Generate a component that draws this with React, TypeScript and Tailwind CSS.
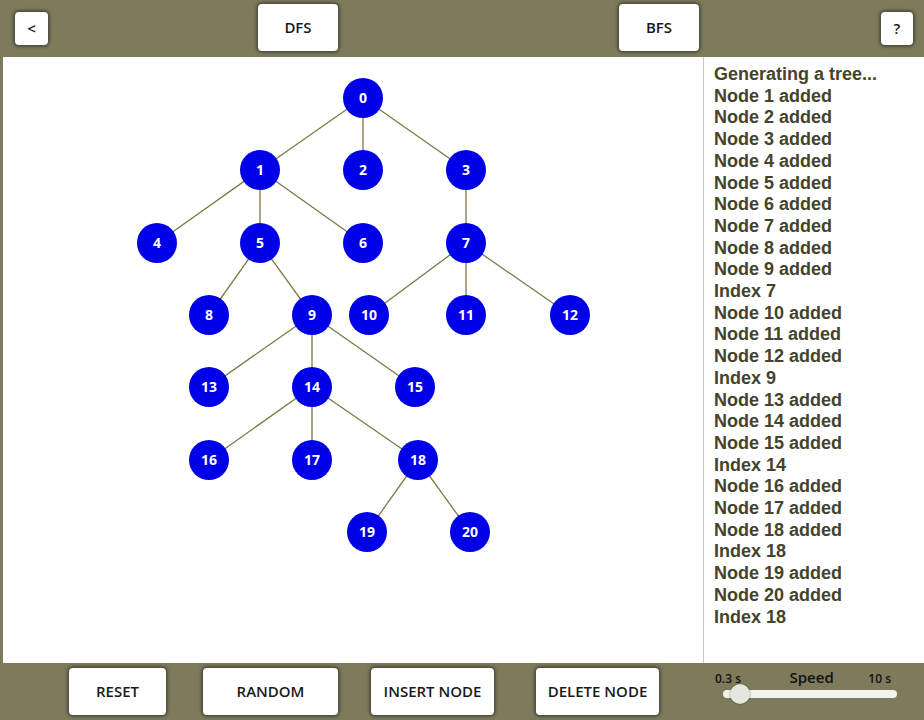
import React from "react";

// Tree layout: node positions on the canvas
const nodes: { id: number; x: number; y: number }[] = [
  { id: 0, x: 363, y: 98 },
  { id: 1, x: 260, y: 170 },
  { id: 2, x: 363, y: 170 },
  { id: 3, x: 466, y: 170 },
  { id: 4, x: 157, y: 243 },
  { id: 5, x: 260, y: 243 },
  { id: 6, x: 363, y: 243 },
  { id: 7, x: 466, y: 243 },
  { id: 8, x: 209, y: 315 },
  { id: 9, x: 312, y: 315 },
  { id: 10, x: 369, y: 315 },
  { id: 11, x: 466, y: 315 },
  { id: 12, x: 570, y: 315 },
  { id: 13, x: 209, y: 387 },
  { id: 14, x: 312, y: 387 },
  { id: 15, x: 415, y: 387 },
  { id: 16, x: 209, y: 460 },
  { id: 17, x: 312, y: 460 },
  { id: 18, x: 418, y: 460 },
  { id: 19, x: 367, y: 532 },
  { id: 20, x: 470, y: 532 },
];

const edges: [number, number][] = [
  [0, 1], [0, 2], [0, 3],
  [1, 4], [1, 5], [1, 6],
  [3, 7],
  [5, 8], [5, 9],
  [7, 10], [7, 11], [7, 12],
  [9, 13], [9, 14], [9, 15],
  [14, 16], [14, 17], [14, 18],
  [18, 19], [18, 20],
];

const log = [
  "Generating a tree...",
  "Node 1 added",
  "Node 2 added",
  "Node 3 added",
  "Node 4 added",
  "Node 5 added",
  "Node 6 added",
  "Node 7 added",
  "Node 8 added",
  "Node 9 added",
  "Index 7",
  "Node 10 added",
  "Node 11 added",
  "Node 12 added",
  "Index 9",
  "Node 13 added",
  "Node 14 added",
  "Node 15 added",
  "Index 14",
  "Node 16 added",
  "Node 17 added",
  "Node 18 added",
  "Index 18",
  "Node 19 added",
  "Node 20 added",
  "Index 18",
];

const btn =
  "flex items-center justify-center rounded-[4px] bg-white text-[15px] font-semibold text-[#1a1a1a] shadow-[0_0_3px_2px_rgba(40,40,40,0.55)] font-['Open_Sans',sans-serif]";

const Tree = () => {
  const pos = (id: number) => nodes[id];
  return (
    <svg width="700" height="606" viewBox="3 57 700 606" className="block">
      {edges.map(([a, b]) => (
        <line
          key={`${a}-${b}`}
          x1={pos(a).x}
          y1={pos(a).y}
          x2={pos(b).x}
          y2={pos(b).y}
          stroke="#7a7a45"
          strokeWidth="1.3"
        />
      ))}
      {nodes.map((n) => (
        <g key={n.id}>
          <circle cx={n.x} cy={n.y} r="20" fill="#0000e8" />
          <text
            x={n.x}
            y={n.y + 5}
            textAnchor="middle"
            fill="#ffffff"
            fontSize="14"
            fontWeight="700"
            fontFamily="'Open Sans', sans-serif"
          >
            {n.id}
          </text>
        </g>
      ))}
    </svg>
  );
};

export default function App() {
  return (
    <div className="flex h-[720px] w-[924px] flex-col overflow-hidden bg-[#7e7b5c]">
      {/* Top bar */}
      <div className="flex h-[57px] items-center">
        <button className={`${btn} ml-[15px] h-[33px] w-[33px]`}>&lt;</button>
        <button className={`${btn} ml-[210px] mt-[4px] h-[47px] w-[80px] self-start`}>DFS</button>
        <button className={`${btn} ml-[281px] mt-[4px] h-[47px] w-[80px] self-start`}>BFS</button>
        <button className={`${btn} ml-[182px] h-[33px] w-[32px]`}>?</button>
      </div>

      {/* Main area */}
      <div className="ml-[3px] flex h-[606px] bg-white">
        <div className="w-[700px]">
          <Tree />
        </div>
        <div className="w-[1px] bg-[#c4c4dc]" />
        <div className="flex-1 pl-[10px] pt-[7px] font-['Liberation_Sans',Arial,sans-serif] text-[18px] font-bold leading-[21.7px] text-[#45432c]">
          {log.map((line, i) => (
            <div key={i}>{line}</div>
          ))}
        </div>
      </div>

      {/* Bottom bar */}
      <div className="flex h-[57px] items-start pt-[5px]">
        <button className={`${btn} ml-[69px] h-[47px] w-[97px]`}>RESET</button>
        <button className={`${btn} ml-[37px] h-[47px] w-[135px]`}>RANDOM</button>
        <button className={`${btn} ml-[33px] h-[47px] w-[123px]`}>INSERT NODE</button>
        <button className={`${btn} ml-[42px] h-[47px] w-[123px]`}>DELETE NODE</button>
        <div className="ml-[56px] flex w-[182px] flex-col font-['Open_Sans',sans-serif] text-[#111]">
          <div className="flex items-end justify-between pr-[6px]">
            <span className="text-[12px] font-semibold leading-[14px]">0.3 s</span>
            <span className="ml-[14px] text-[15px] font-semibold leading-[18px]">Speed</span>
            <span className="text-[12px] font-semibold leading-[14px]">10 s</span>
          </div>
          <div className="relative ml-[8px] mt-[4px] h-[8px] w-[174px] rounded-full bg-[#f2f2ee]">
            <div className="absolute left-[7px] top-[-6px] h-[20px] w-[20px] rounded-full bg-[#e6e6e0] shadow-[0_0_2px_rgba(0,0,0,0.5)]" />
          </div>
        </div>
      </div>
    </div>
  );
}
